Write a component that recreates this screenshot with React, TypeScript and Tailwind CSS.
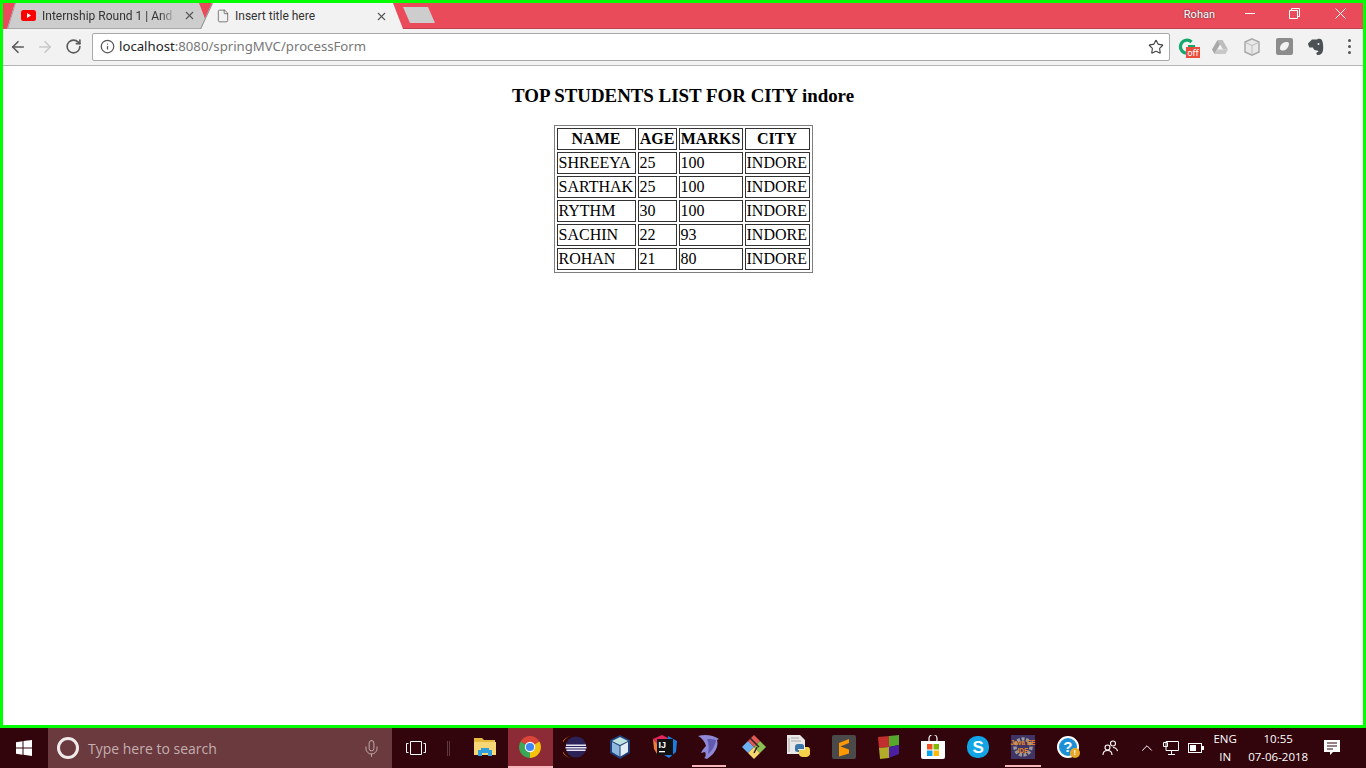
import React from 'react';
import { ArrowLeft, ArrowRight, RotateCw, Info, Star, X, File, Mic, ChevronUp } from 'lucide-react';

const ROWS = [
  ['SHREEYA', '25', '100', 'INDORE'],
  ['SARTHAK', '25', '100', 'INDORE'],
  ['RYTHM', '30', '100', 'INDORE'],
  ['SACHIN', '22', '93', 'INDORE'],
  ['ROHAN', '21', '80', 'INDORE'],
];

const TabBar = () => (
  <div className="flex h-[26px] shrink-0 items-stretch bg-[#e94b5b] font-['Roboto',sans-serif] text-[12px]">
    <div className="relative ml-[4px] flex w-[202px] shrink-0 items-center border-b border-[#a8a8a8] bg-[#cdcdcd] pl-[14px] [clip-path:polygon(8px_0,192px_0,202px_26px,0_26px)]">
      <svg width="15" height="11" viewBox="0 0 15 11" className="shrink-0">
        <rect width="15" height="11" rx="2.5" fill="#f00" />
        <path d="M6 3l4 2.5L6 8z" fill="#fff" />
      </svg>
      <span className="ml-[6px] w-[134px] overflow-hidden whitespace-nowrap text-[#333] [mask-image:linear-gradient(to_right,black_88%,transparent)]">
        Internship Round 1 | And
      </span>
      <X size={13} strokeWidth={2} className="ml-[7px] shrink-0 text-[#555]" />
      <svg width="10" height="26" viewBox="0 0 10 26" className="absolute left-0 top-0">
        <path d="M8.500 0L.5 26" stroke="#a0a0a0" fill="none" />
      </svg>
    </div>
    <div className="relative z-10 ml-[-9px] flex w-[203px] shrink-0 items-center bg-[#f2f2f2] pl-[16px] [clip-path:polygon(12px_0,193px_0,203px_26px,0_26px)]">
      <File size={14} strokeWidth={1.3} className="shrink-0 text-[#555]" />
      <span className="ml-[5px] w-[140px] whitespace-nowrap text-[#333]">Insert title here</span>
      <X size={13} strokeWidth={2} className="shrink-0 text-[#555]" />
      <svg width="14" height="26" viewBox="0 0 14 26" className="absolute left-0 top-0">
        <path d="M12 0L0 26" stroke="#8c8c8c" strokeWidth="2" fill="none" />
      </svg>
    </div>
    <div className="flex flex-1 border-b border-[#bf4350]">
      <div className="mt-[4px] h-[16px] w-[32px] shrink-0 bg-[#cdcdcd] [clip-path:polygon(0_0,25px_0,32px_16px,7px_16px)]" />
      <div className="flex-1" />
      <span className="mt-[4px] text-[11px] text-white [text-shadow:0_0_2px_#333]">Rohan</span>
      <div className="ml-[14px] flex h-[20px] w-[42px] items-center justify-center">
        <div className="h-px w-[10px] bg-white" />
      </div>
      <div className="flex h-[20px] w-[46px] items-center justify-center">
        <svg width="11" height="11" viewBox="0 0 11 11" fill="none" stroke="#fff">
          <path d="M.5 2.500h8v8h-8zM2.500 2.500v-2h8v8h-2" />
        </svg>
      </div>
      <div className="flex h-[20px] w-[46px] items-center justify-center">
        <svg width="11" height="11" viewBox="0 0 11 11" fill="none" stroke="#fff">
          <path d="M.5.5l10 10M10.500.5l-10 10" />
        </svg>
      </div>
    </div>
  </div>
);

const Grammarly = () => (
  <div className="relative h-[20px] w-[20px]">
    <svg width="18" height="18" viewBox="0 0 18 18" fill="none">
      <path d="M13.500 5a6.500 6.500 0 1 0 2 4.500H10" stroke="#15a86c" strokeWidth="3.2" />
    </svg>
    <span className="absolute left-[8px] top-[10px] flex h-[11px] w-[14px] items-center justify-center bg-[#ea4c3c] font-['Noto_Sans',sans-serif] text-[9px] leading-none text-white">
      off
    </span>
  </div>
);

const DriveIcon = () => (
  <svg width="16" height="14" viewBox="0 0 16 14">
    <path d="M5.500 0h5L16 9.500h-5z" fill="#bdbdbd" />
    <path d="M5.500 0L0 9.500 2.500 14l5.500-9.500z" fill="#a9a9a9" />
    <path d="M5.500 9.500H16L13.500 14H2.500z" fill="#c7c7c7" />
  </svg>
);

const BoxIcon = () => (
  <svg width="16" height="18" viewBox="0 0 16 18">
    <path d="M8 .8l7 3.200v10l-7 3.200-7-3.200V4z" fill="#e8e8e8" stroke="#a6a6a6" strokeWidth="1.4" />
    <path d="M1.500 4.500L8 7.500l6.500-3M8 7.500V17" fill="none" stroke="#bdbdbd" />
  </svg>
);

const PocketIcon = () => (
  <svg width="17" height="17" viewBox="0 0 17 17">
    <rect width="17" height="17" rx="2" fill="#8c8c8c" />
    <path d="M4 10.500c0-4 3-6.500 7-6.500 2 0 2.500 1.500 1.500 4-1 2.500-3 4.500-5.500 4.500C5 12.500 4 12 4 10.500z" fill="#f2f2f2" />
  </svg>
);

const ElephantIcon = () => (
  <svg width="16" height="18" viewBox="0 0 16 18">
    <path d="M4 1.500h5c.5-1 3.500-1 4.500 0 1.500 2 2 7 1.500 11-.5 3.500-3.500 5-5.500 4.500-1.500-.5-1.500-3 .5-3 .5 0 .5-1.500-1-1.500-2.500 0-3.500-1-4-3H1.500C.5 8 0 6 0 5.500z" fill="#4b5154" />
    <circle cx="10.500" cy="6" r="1" fill="#f2f2f2" />
  </svg>
);

const Toolbar = () => (
  <div className="flex h-[37px] shrink-0 items-center border-b border-[#b5b5b5] bg-[#f2f2f2] pb-px">
    <ArrowLeft size={18} strokeWidth={2.2} className="ml-[6px] text-[#5a5a5a]" />
    <ArrowRight size={18} strokeWidth={2.2} className="ml-[9px] text-[#c9c9c9]" />
    <RotateCw size={17} strokeWidth={2.3} className="ml-[11px] text-[#5a5a5a]" />
    <div className="ml-[10px] flex h-[28px] w-[1078px] items-center rounded-[2px] border border-[#a9a9a9] bg-white pl-[7px] pr-[5px] font-['Noto_Sans',sans-serif] text-[13.2px]">
      <Info size={15} strokeWidth={2} className="text-[#555]" />
      <span className="ml-[4px] text-[#222]">localhost</span>
      <span className="text-[#777]">:8080/springMVC/processForm</span>
      <Star size={16} strokeWidth={1.7} className="ml-auto text-[#444]" />
    </div>
    <div className="ml-[8px] flex items-center gap-[12px]">
      <div className="flex w-[20px] justify-center"><Grammarly /></div>
      <div className="flex w-[20px] justify-center"><DriveIcon /></div>
      <div className="flex w-[20px] justify-center"><BoxIcon /></div>
      <div className="flex w-[20px] justify-center"><PocketIcon /></div>
      <div className="flex w-[20px] justify-center"><ElephantIcon /></div>
      <div className="ml-[10px] flex w-[3px] flex-col gap-[3px]">
        <div className="h-[3px] w-[3px] rounded-full bg-[#555]" />
        <div className="h-[3px] w-[3px] rounded-full bg-[#555]" />
        <div className="h-[3px] w-[3px] rounded-full bg-[#555]" />
      </div>
    </div>
  </div>
);

const StudentTable = () => (
  <div className="flex-1 bg-white font-['Liberation_Serif',serif] text-[16px] leading-[18px] text-black">
    <h3 className="mb-[19px] mt-[19px] text-center text-[18.9px] font-bold leading-[21px]">TOP STUDENTS LIST FOR CITY indore</h3>
    <table className="mx-auto w-[259px] table-fixed border-separate border-spacing-[2px] border border-[#7f7f7f]">
      <thead>
        <tr>
          <th className="w-[79px] border border-[#333] p-px text-center font-bold">NAME</th>
          <th className="w-[39px] border border-[#333] p-px text-center font-bold">AGE</th>
          <th className="w-[64px] border border-[#333] p-px text-center font-bold">MARKS</th>
          <th className="w-[65px] border border-[#333] p-px text-center font-bold">CITY</th>
        </tr>
      </thead>
      <tbody>
        {ROWS.map((row) => (
          <tr key={row[0]}>
            {row.map((cell, i) => (
              <td key={i} className="border border-[#333] p-px whitespace-nowrap">{cell}</td>
            ))}
          </tr>
        ))}
      </tbody>
    </table>
  </div>
);

const ExplorerIcon = () => (
  <svg width="22" height="20" viewBox="0 0 22 20">
    <path d="M0 1h8l2 2h11v3H0z" fill="#e8b93f" />
    <path d="M0 5h22v13H0z" fill="#f6d675" />
    <path d="M7 11h8v2h3v6h-4v-3H8v3H4v-6h3z" fill="#2f9fe0" />
  </svg>
);

const ChromeIcon = () => (
  <svg width="22" height="22" viewBox="0 0 22 22">
    <path d="M11 11L20.500 5.500A11 11 0 0 0 1.500 5.500z" fill="#dc4437" />
    <path d="M11 11V22A11 11 0 0 0 20.500 5.500z" fill="#f4c20d" />
    <path d="M11 11L1.500 5.500A11 11 0 0 0 11 22z" fill="#3ba757" />
    <circle cx="11" cy="11" r="5.200" fill="#fff" />
    <circle cx="11" cy="11" r="4.100" fill="#4285f4" />
  </svg>
);

const EclipseIcon = () => (
  <svg width="24" height="22" viewBox="0 0 24 22">
    <path d="M10 0a11 11 0 0 0 0 22 12 11 0 0 1 0-22z" fill="#f28a1e" />
    <circle cx="13" cy="11" r="10.500" fill="#2c2255" />
    <path d="M3 8.500h20v1.400H3zM2.500 11h21v1.400h-21zM3.500 13.500h19v1.400h-19z" fill="#e8e4f2" />
  </svg>
);

const CubeIcon = () => (
  <svg width="22" height="24" viewBox="0 0 22 24">
    <path d="M11 0l10 5v13l-10 6-10-6V5z" fill="#1f3f78" />
    <path d="M11 2l8 4-8 4-8-4z" fill="#bfe3e0" />
    <path d="M3 7l7.500 4v10.500L3 17z" fill="#8fb8e0" />
    <path d="M19 7l-7.500 4v10.500L19 17z" fill="#e2edf6" />
  </svg>
);

const IntellijIcon = () => (
  <div className="relative h-[24px] w-[24px]">
    <svg width="24" height="24" viewBox="0 0 24 24" className="block">
      <path d="M0 4l9-4 6 3-8 9z" fill="#e8265c" />
      <path d="M15 1l9 5-1 11-7 6-5-3z" fill="#1a7fe0" />
      <path d="M0 4l7 8-3 7-3-5z" fill="#f07a3a" />
      <rect x="4" y="4" width="16" height="16" fill="#111" />
      <rect x="6" y="16" width="6" height="1.300" fill="#fff" />
    </svg>
    <span className="absolute left-[6px] top-[4px] font-['Liberation_Sans',sans-serif] text-[9px] font-bold leading-[12px] text-white">IJ</span>
  </div>
);

const DolphinIcon = () => (
  <svg width="22" height="24" viewBox="0 0 22 24">
    <path d="M0 1c7-2 15-1 21 3l-2 1c2 6-2 14-10 19l-3-1c2-1 2-4 1-6l-4 1c1-3 3-5 5-7C7 7 4 3 0 1z" fill="#8f88d6" />
    <path d="M9 4c3 0 7 0 9 1-1 6-4 11-8 14 1-5 1-10-1-15z" fill="#6059b0" />
  </svg>
);

const GitKrakenIcon = () => (
  <svg width="24" height="24" viewBox="0 0 24 24">
    <path d="M12 12L6 6 0 12l6 6z" fill="#6cb2f2" />
    <path d="M12 12l6-6-6-6-6 6z" fill="#e05a55" />
    <path d="M12 12l6 6 6-6-6-6z" fill="#8cc152" />
    <path d="M12 12l-6 6 6 6 6-6z" fill="#f5d76e" />
    <path d="M8 3l9 9M15 12l-3 6" stroke="#30202a" strokeWidth="1.500" fill="none" />
  </svg>
);

const PythonFileIcon = () => (
  <svg width="24" height="24" viewBox="0 0 24 24">
    <path d="M0 0h13l5 5v14H0z" fill="#e8e8e8" />
    <path d="M2 3v14M4 3h8M4 6h10" stroke="#aaa" fill="none" />
    <path d="M8 12c0-2 1-3 3-3h4c1 0 2 1 2 2v3H11v1h5v2h-5c-2 0-3-1-3-2z" fill="#3a76a8" />
    <path d="M23 15c0-2-1-3-2-3h-3v3h-6v4c0 2 2 3 4 3h3c2 0 4-2 4-3z" fill="#f7d04a" />
  </svg>
);

const SublimeIcon = () => (
  <svg width="24" height="24" viewBox="0 0 24 24">
    <rect width="24" height="24" rx="2" fill="#4a4a4a" />
    <path d="M17 4v4L7 12V8zM7 11l10 3.500v4l-10 3V17z" fill="#ff9800" />
  </svg>
);

const BlocksIcon = () => (
  <svg width="22" height="24" viewBox="0 0 22 24">
    <path d="M0 2l11-1v11L1 13z" fill="#c22d2d" />
    <path d="M11 1l10-1v10l-10 2z" fill="#55a82c" />
    <path d="M1 13l10-1v11L2 24z" fill="#b3ab28" />
    <path d="M11 12l10-2v9l-10 4z" fill="#4a1fa0" />
  </svg>
);

const StoreIcon = () => (
  <svg width="24" height="24" viewBox="0 0 24 24">
    <path d="M8 6V3.500a4 4 0 0 1 8 0V6" fill="none" stroke="#fff" strokeWidth="1.200" />
    <path d="M0 6h24v16a2 2 0 0 1-2 2H2a2 2 0 0 1-2-2z" fill="#fff" />
    <path d="M6 9h5.500v5.500H6z" fill="#f25022" />
    <path d="M12.500 9H18v5.500h-5.500z" fill="#7fba00" />
    <path d="M6 15.500h5.500V21H6z" fill="#00a4ef" />
    <path d="M12.500 15.500H18V21h-5.500z" fill="#ffb900" />
  </svg>
);

const SkypeIcon = () => (
  <div className="flex h-[22px] w-[22px] items-center justify-center rounded-[10px] bg-[#12a5e6] font-['Liberation_Sans',sans-serif] text-[17px] font-bold leading-none text-white">
    S
  </div>
);

const JavaEEIcon = () => (
  <div className="relative flex h-[24px] w-[24px] flex-col items-center justify-center whitespace-nowrap bg-[#3f3464] font-['Liberation_Sans',sans-serif] text-[6.5px] font-bold leading-[8px] text-[#e88a2a]">
    <svg width="24" height="24" viewBox="0 0 24 24" fill="none" className="absolute left-0 top-0">
      <circle cx="12" cy="12" r="8" stroke="#9a9a9a" strokeWidth="3.500" strokeDasharray="3 1.500" />
    </svg>
    <span className="relative">Java EE</span>
    <span className="relative">IDE</span>
  </div>
);

const HelpIcon = () => (
  <div className="relative h-[22px] w-[22px] rounded-full border-2 border-white bg-[#1d8fd6] text-center font-['Liberation_Sans',sans-serif] text-[15px] font-bold leading-[18px] text-white">
    ?
    <span className="absolute left-[11px] top-[10px] flex h-[10px] w-[10px] items-center justify-center rounded-full bg-[#e8a825] text-[8px] leading-none">!</span>
  </div>
);

const APPS = [
  { id: 'explorer', icon: <ExplorerIcon /> },
  { id: 'chrome', icon: <ChromeIcon />, active: true },
  { id: 'eclipse', icon: <EclipseIcon /> },
  { id: 'cube', icon: <CubeIcon /> },
  { id: 'idea', icon: <IntellijIcon /> },
  { id: 'dolphin', icon: <DolphinIcon />, open: true },
  { id: 'git', icon: <GitKrakenIcon /> },
  { id: 'python', icon: <PythonFileIcon /> },
  { id: 'sublime', icon: <SublimeIcon /> },
  { id: 'blocks', icon: <BlocksIcon /> },
  { id: 'store', icon: <StoreIcon /> },
  { id: 'skype', icon: <SkypeIcon /> },
  { id: 'javaee', icon: <JavaEEIcon />, open: true },
  { id: 'help', icon: <HelpIcon /> },
];

const Taskbar = () => (
  <div className="flex h-10 shrink-0 items-stretch bg-[#32040b] font-['Open_Sans',sans-serif] text-white">
    <div className="flex w-[48px] items-center justify-center">
      <svg width="16" height="16" viewBox="0 0 16 16" fill="#fff">
        <path d="M0 2.300l6.500-1v6.200H0zM7.500 1.100L16 0v7.500H7.500zM0 8.500h6.500v6.200l-6.500-1zM7.500 8.500H16V16l-8.500-1.200z" />
      </svg>
    </div>
    <div className="flex w-[344px] items-center bg-[#6a3a3e] pl-[9px] pr-[11px]">
      <div className="h-[22px] w-[22px] rounded-full border-[3px] border-[#f1eaea]" />
      <span className="ml-[9px] pt-px text-[14px] text-[#c4aeb0]">Type here to search</span>
      <Mic size={19} strokeWidth={1.2} className="ml-auto text-[#c4aeb0]" />
    </div>
    <div className="flex w-[48px] items-center justify-center">
      <svg width="20" height="14" viewBox="0 0 20 14" fill="none" stroke="#fff">
        <path d="M4.500.5h11v13h-11zM2.500 2.500H.5v9h2M17.500 2.500h2v9h-2" />
      </svg>
    </div>
    <div className="ml-[7px] mt-[13px] h-[15px] w-[3px] border-x border-[#5e3a3e]" />
    <div className="ml-[13px] flex">
      {APPS.map((app) => (
        <div
          key={app.id}
          className={`flex w-[44.8px] items-center justify-center border-b-2 ${
            app.active ? 'border-[#f5b5bb] bg-[#8c2a35]' : 'border-transparent'
          }`}
        >
          <div className={`mb-[-2px] flex h-full items-center justify-center border-b-2 px-[6px] ${app.open ? 'border-[#f5b5bb]' : 'border-transparent'}`}>
            {app.icon}
          </div>
        </div>
      ))}
    </div>
    <div className="ml-[8px] flex w-[24px] items-center justify-center">
      <svg width="16" height="16" viewBox="0 0 16 16" fill="none" stroke="#fff" strokeWidth="1.100">
        <circle cx="11" cy="3.500" r="2.500" />
        <circle cx="5.500" cy="7.500" r="2.500" />
        <path d="M1 15c0-3 2-4.500 4.500-4.500S10 12 10 15M11 7.500c2.500 0 4 1.500 4.500 3.500" />
      </svg>
    </div>
    <ChevronUp size={18} strokeWidth={1.3} className="ml-[16px] self-center" />
    <svg width="16" height="14" viewBox="0 0 16 14" fill="none" stroke="#fff" className="ml-[7px] self-center">
      <path d="M3 .5h12.500v9H3zM5 13.500h7M8.500 9.500v4M.5 1.500h4v4h-4z" />
    </svg>
    <svg width="16" height="10" viewBox="0 0 16 10" className="ml-[9px] self-center">
      <rect x=".5" y=".5" width="13" height="9" fill="none" stroke="#fff" />
      <rect x="2" y="2" width="6" height="6" fill="#fff" />
      <rect x="14" y="3" width="2" height="4" fill="#fff" />
    </svg>
    <div className="ml-[3px] flex w-[36px] flex-col items-center justify-center text-[11.5px] leading-[18px]">
      <span>ENG</span>
      <span>IN</span>
    </div>
    <div className="ml-[1px] flex w-[68px] flex-col items-center justify-center text-[11.5px] leading-[18px]">
      <span>10:55</span>
      <span>07-06-2018</span>
    </div>
    <div className="ml-[12px] flex items-center">
      <svg width="17" height="16" viewBox="0 0 17 16">
        <path d="M0 0h16v12H9l-3 3v-3H0z" fill="#fff" />
        <path d="M3 3h10M3 6h10M3 9h6" stroke="#32040b" />
      </svg>
    </div>
  </div>
);

const App: React.FC = () => {
  return (
    <div className="flex h-[768px] w-[1366px] flex-col overflow-hidden">
      <div className="flex h-[728px] flex-col border-[3px] border-[#00ff00]">
        <TabBar />
        <Toolbar />
        <StudentTable />
      </div>
      <Taskbar />
    </div>
  );
};

export default App;
